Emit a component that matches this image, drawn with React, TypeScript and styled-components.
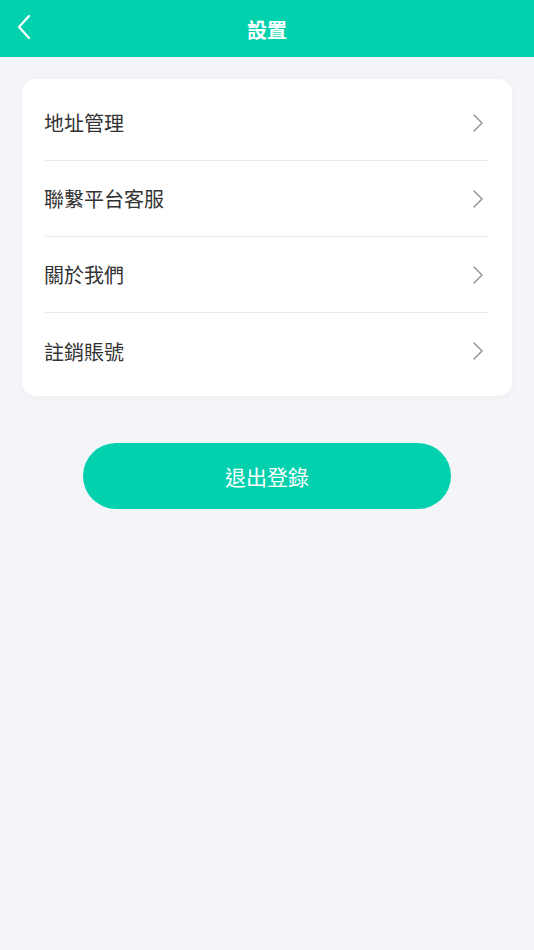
import React from "react";
import styled, { createGlobalStyle } from "styled-components";

const GlobalStyle = createGlobalStyle`
  html, body {
    margin: 0;
    padding: 0;
    background: #f4f5f9;
    font-family: "Noto Sans CJK TC", "Noto Sans CJK SC", "Noto Sans", sans-serif;
  }
`;

const items = ["地址管理", "聯繫平台客服", "關於我們", "註銷賬號"];

const ChevronLeft = () => (
  <svg width="16" height="26" viewBox="0 0 16 26" fill="none">
    <path
      d="M13 2L3 13l10 11"
      stroke="#fff"
      strokeWidth="2.2"
      strokeLinecap="round"
      strokeLinejoin="round"
    />
  </svg>
);

const ChevronRight = () => (
  <svg width="12" height="20" viewBox="0 0 12 20" fill="none">
    <path
      d="M2 2l8 8-8 8"
      stroke="#999"
      strokeWidth="1.6"
      strokeLinecap="round"
      strokeLinejoin="round"
    />
  </svg>
);

const App = () => {
  return (
    <Page>
      <GlobalStyle />
      <Header>
        <BackBtn>
          <ChevronLeft />
        </BackBtn>
        <Title>設置</Title>
      </Header>
      <Content>
        <Card>
          {items.map((label, i) => (
            <Row key={label} last={i === items.length - 1}>
              <RowLabel>{label}</RowLabel>
              <ChevronRight />
            </Row>
          ))}
        </Card>
        <LogoutBtn>退出登錄</LogoutBtn>
      </Content>
    </Page>
  );
};

export default App;

const Page = styled.div`
  min-height: 950px;
  background: #f4f5f9;
`;

const Header = styled.div`
  position: relative;
  height: 57px;
  background: #03d1ad;
  display: flex;
  align-items: center;
  justify-content: center;
`;

const BackBtn = styled.div`
  position: absolute;
  left: 16px;
  top: 14px;
  display: flex;
`;

const Title = styled.div`
  color: #fff;
  font-size: 20px;
  font-weight: 700;
  margin-top: 2px;
`;

const Content = styled.div`
  padding: 22px 22px 0;
  display: flex;
  flex-direction: column;
  align-items: center;
`;

const Card = styled.div`
  align-self: stretch;
  background: #fff;
  border-radius: 14px;
  padding: 6px 23px 7px;
  box-shadow: 0 2px 8px rgba(0, 0, 0, 0.03);
`;

const Row = styled.div<{ last?: boolean }>`
  height: 76px;
  box-sizing: border-box;
  display: flex;
  align-items: center;
  justify-content: space-between;
  padding-right: 5px;
  border-bottom: ${(p) => (p.last ? "none" : "1.5px solid #e8e8e8")};
`;

const RowLabel = styled.span`
  font-size: 20px;
  color: #333;
  margin-left: -1px;
`;

const LogoutBtn = styled.button`
  margin-top: 47px;
  width: 368px;
  height: 66px;
  border: none;
  border-radius: 33px;
  background: #03d1ad;
  color: #fff;
  font-size: 21px;
  font-family: inherit;
`;
